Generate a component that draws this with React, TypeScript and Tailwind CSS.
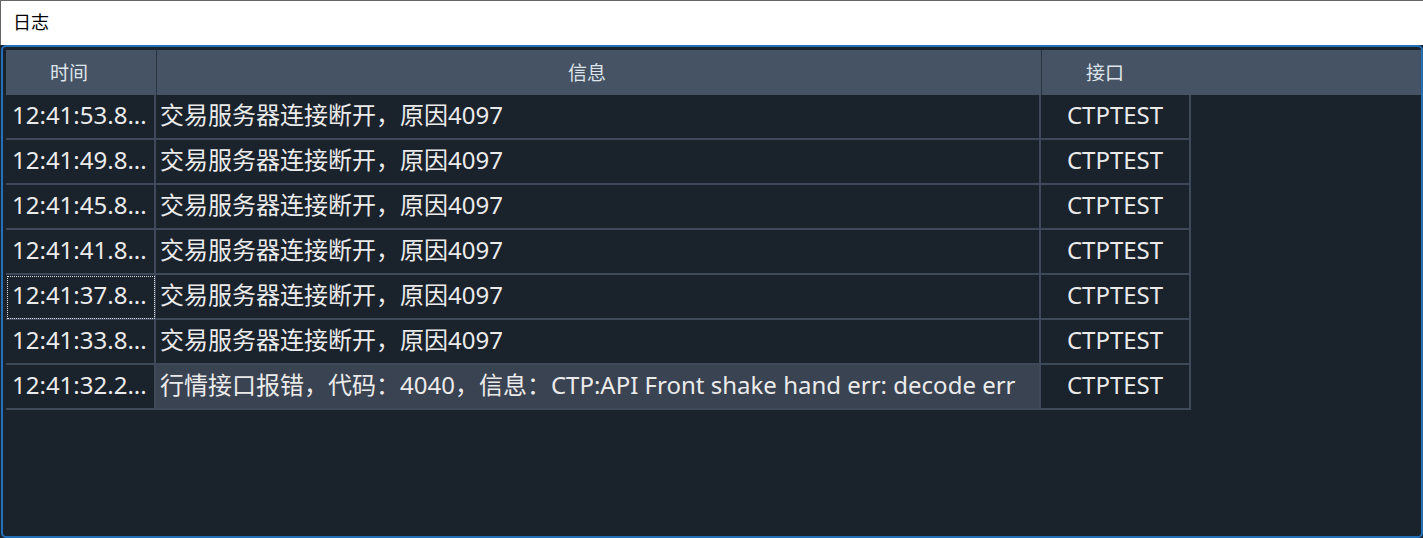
const rows = [
  { time: '12:41:53.8...', msg: '交易服务器连接断开，原因4097', gw: 'CTPTEST' },
  { time: '12:41:49.8...', msg: '交易服务器连接断开，原因4097', gw: 'CTPTEST' },
  { time: '12:41:45.8...', msg: '交易服务器连接断开，原因4097', gw: 'CTPTEST' },
  { time: '12:41:41.8...', msg: '交易服务器连接断开，原因4097', gw: 'CTPTEST' },
  { time: '12:41:37.8...', msg: '交易服务器连接断开，原因4097', gw: 'CTPTEST', focused: true },
  { time: '12:41:33.8...', msg: '交易服务器连接断开，原因4097', gw: 'CTPTEST' },
  {
    time: '12:41:32.2...',
    msg: '行情接口报错，代码：4040，信息：CTP:API Front shake hand err: decode err',
    gw: 'CTPTEST',
    selected: true,
  },
];

export default function App() {
  return (
    <div className="w-[1423px] h-[538px] flex flex-col bg-[#1b232d] overflow-hidden font-['Noto_Sans','Noto_Sans_CJK_SC',sans-serif]">
      <div className="h-[45px] shrink-0 bg-white border-t border-l border-[#666] flex items-center pl-3 pb-[3px] text-[18px] text-black font-['Noto_Sans_CJK_SC',sans-serif]">
        日志
      </div>

      <div className="flex-1 ml-px border-2 border-[#2470b8] rounded-[5px] bg-[#1a222c] pl-[3px] pt-[3px]">
        {/* header */}
        <div className="flex h-[45px] bg-[#465365] text-[19px] text-[#dfe4ea] font-['Noto_Sans_CJK_SC',sans-serif]">
          <div className="w-[151px] border-r border-[#2b3541] flex items-center justify-center pr-6">时间</div>
          <div className="w-[885px] border-r border-[#2b3541] flex items-center justify-center pr-6">信息</div>
          <div className="flex-1 flex">
            <div className="w-[150px] flex items-center justify-center pr-6">接口</div>
          </div>
        </div>

        {/* rows */}
        <div className="flex flex-col text-[24px] text-[#ebebeb]">
          {rows.map((r, i) => (
            <div key={i} className="flex h-[45px]">
              <div
                className={`w-[150px] border-r-2 border-b-2 border-[#3e4a5a] flex items-center pl-[6px] pb-[3px] whitespace-nowrap overflow-hidden ${
                  r.focused ? 'outline-1 outline-dotted outline-[#dddddd] -outline-offset-2' : ''
                }`}
              >
                {r.time}
              </div>
              <div
                className={`w-[885px] border-r-2 border-b-2 border-[#3e4a5a] flex items-center pl-[4px] pb-[3px] whitespace-nowrap overflow-hidden ${
                  r.selected ? 'bg-[#3a4351]' : ''
                }`}
              >
                {r.msg}
              </div>
              <div className="w-[150px] border-r-2 border-b-2 border-[#3e4a5a] flex items-center justify-center pb-[3px]">
                {r.gw}
              </div>
            </div>
          ))}
        </div>
      </div>
    </div>
  );
}
